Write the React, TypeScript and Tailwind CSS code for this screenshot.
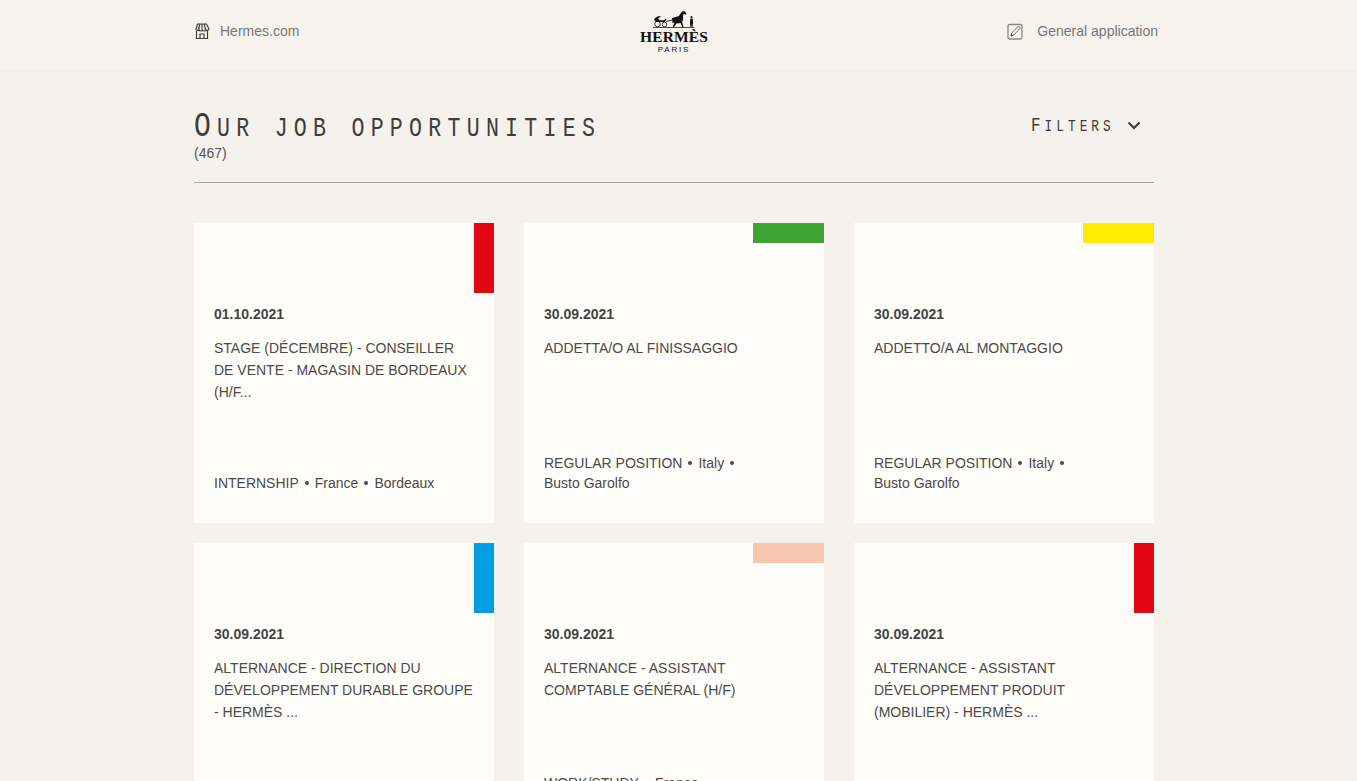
const JOBS = [
  {
    date: "01.10.2021",
    title: ["STAGE (DÉCEMBRE) - CONSEILLER", "DE VENTE - MAGASIN DE BORDEAUX", "(H/F..."],
    meta: [["INTERNSHIP", "France", "Bordeaux"]],
    tag: "tall",
    color: "bg-[#e30613]",
  },
  {
    date: "30.09.2021",
    title: ["ADDETTA/O AL FINISSAGGIO"],
    meta: [["REGULAR POSITION", "Italy", ""], ["Busto Garolfo"]],
    tag: "wide",
    color: "bg-[#3ea535]",
  },
  {
    date: "30.09.2021",
    title: ["ADDETTO/A AL MONTAGGIO"],
    meta: [["REGULAR POSITION", "Italy", ""], ["Busto Garolfo"]],
    tag: "wide",
    color: "bg-[#ffec00]",
  },
  {
    date: "30.09.2021",
    title: ["ALTERNANCE - DIRECTION DU", "DÉVELOPPEMENT DURABLE GROUPE", "- HERMÈS ..."],
    meta: [["WORK/STUDY", "France", "Pantin"]],
    tag: "tall",
    color: "bg-[#009fe3]",
  },
  {
    date: "30.09.2021",
    title: ["ALTERNANCE - ASSISTANT", "COMPTABLE GÉNÉRAL (H/F)"],
    meta: [["WORK/STUDY", "France", ""], ["Pantin"]],
    tag: "wide",
    color: "bg-[#f6c6ae]",
  },
  {
    date: "30.09.2021",
    title: ["ALTERNANCE - ASSISTANT", "DÉVELOPPEMENT PRODUIT", "(MOBILIER) - HERMÈS ..."],
    meta: [["WORK/STUDY", "France", "Pantin"]],
    tag: "tall",
    color: "bg-[#e30613]",
  },
];

function ShopIcon() {
  return (
    <svg width="16" height="16" viewBox="0 0 16 16" fill="none" stroke="#3f3c3a" strokeWidth="1.200">
      <path d="M3.500 1h9l2.500 5a1.600 1.600 0 0 1-3 .6 1.800 1.800 0 0 1-3.500 0 1.800 1.800 0 0 1-3.500 0 1.600 1.600 0 0 1-3-.6z" />
      <path d="M5.800 1 4.500 6.500M8 1v5.500M10.200 1l1.300 5.500" />
      <path d="M2.500 8v7.500h11V8M6 15.500V11h4v4.500" />
    </svg>
  );
}

function EditIcon() {
  return (
    <svg width="16" height="17" viewBox="0 0 16 17" fill="none" stroke="#8a8783" strokeWidth="1.300">
      <rect x="1" y="1.500" width="14" height="14.500" rx="1.500" />
      <path d="M4 13l.8-3L11.500 3l2 2-6.700 7z" fill="#f5f1ec" stroke="#6f6c69" strokeWidth="1" />
      <path d="M4 13l.6-1.500.9.900z" fill="#333" stroke="#333" strokeWidth="0.600" />
    </svg>
  );
}

function Chevron() {
  return (
    <svg width="14" height="9" viewBox="0 0 14 9" fill="none" stroke="#3c3a38" strokeWidth="2">
      <path d="M1.500 1.500 7 7l5.500-5.500" />
    </svg>
  );
}

function Carriage() {
  return (
    <svg width="42" height="17" viewBox="0 0 42 17" fill="#111">
      {/* caleche */}
      <path d="M1 8.500c2-3 4-3.500 6-3.500l.8 1-1.800.6c-.8 1-.8 2 .6 2.600h4.400l2-1.600.6 1-2 2.400H3z" />
      <circle cx="4.500" cy="13" r="2.800" fill="none" stroke="#111" strokeWidth="0.800" />
      <circle cx="11.500" cy="13.500" r="2.300" fill="none" stroke="#111" strokeWidth="0.800" />
      <path d="M13 10l7-1.500.3.800-7 1.500z" />
      {/* horse */}
      <path d="M19 7c3-1 5-1 7-2 1-2 2-4 4-5l2 .5 1.500 2.500-1 .8-1.800-1L30 5c0 2 .5 4-1 6l1.500 5h-1.200L27.500 12l-4 .5-2.500 3.500h-1.300l1.800-4.500-2 .5z" />
      {/* groom */}
      <circle cx="38.500" cy="6" r="1.100" />
      <path d="M37.300 7.500h2.400l.4 4.500-.6 4h-.8l-.2-3-.2 3h-.8l-.5-4z" />
      <path d="M0 16h41.500v.7H0z" />
    </svg>
  );
}

function Logo() {
  return (
    <div className="flex flex-col items-center pt-[11px]">
      <Carriage />
      <p className="mt-[1px] text-[15.500px] leading-[15px] font-bold tracking-[0.100px] text-[#111] font-['Liberation_Serif',serif]">
        HERMÈS
      </p>
      <p className="mt-[1px] text-[8px] leading-[9px] tracking-[1.800px] text-[#111] font-['Liberation_Sans',sans-serif]">PARIS</p>
    </div>
  );
}

function JobCard({ job }: { job: (typeof JOBS)[number] }) {
  return (
    <article className="relative flex h-[300px] flex-col bg-[#fffdf9] px-5 pt-[81px] pb-[30px] text-[14px] text-[#4a4a4a]">
      <div className={`absolute top-0 right-0 ${job.tag === "tall" ? "h-[70px] w-5" : "h-5 w-[71px]"} ${job.color}`} />
      <p className="text-[14px] leading-5 font-bold text-[#444]">{job.date}</p>
      <div className="mt-[13px] leading-[22px]">
        {job.title.map((line) => (
          <p key={line}>{line}</p>
        ))}
      </div>
      <div className="mt-auto leading-5">
        {job.meta.map((row, i) => (
          <p key={i} className="flex items-center">
            {row.map((part, j) => (
              <span key={j} className="flex items-center">
                {j > 0 && <span className="mx-[6px] h-[4px] w-[4px] rounded-full bg-[#4a4a4a]" />}
                {part}
              </span>
            ))}
          </p>
        ))}
      </div>
    </article>
  );
}

export default function App() {
  return (
    <div className="h-screen overflow-hidden bg-[#f5f1ec] pr-[9px] font-['Liberation_Sans',sans-serif]">
      <header className="-mr-[9px] h-[70px] bg-[#f6f2ec] pr-[9px]">
        <div className="mx-auto flex w-[960px] justify-between">
          <a className="mt-[23px] flex h-4 w-[300px] items-center gap-[10px] text-[14px] text-[#777]">
            <ShopIcon />
            Hermes.com
          </a>
          <Logo />
          <a className="mt-[23px] -mr-1 flex h-[17px] w-[304px] items-center justify-end gap-[14px] text-[14px] text-[#777]">
            <EditIcon />
            General application
          </a>
        </div>
      </header>
      <div className="-mr-[9px] h-[15px] bg-gradient-to-b from-[#f3efe8] to-[#f5f1ec]" />

      <main className="mx-auto w-[960px]">
        <div className="flex justify-between border-b border-[#aaa6a0] pt-5 pb-[21px]">
          <div>
            <h1 className="h-10 origin-left scale-x-[0.8] text-[27px] leading-[44px] tracking-[7.800px] whitespace-nowrap text-[#3f3c39] font-['Liberation_Mono',monospace]">
              <span className="text-[35px]">O</span>UR JOB OPPORTUNITIES
            </h1>
            <p className="text-[14px] leading-[16px] text-[#555]">(467)</p>
          </div>
          <button className="mr-[13px] flex h-[40px] items-center gap-[14px]">
            <span className="mt-[2px] w-[82px] origin-left scale-x-[0.8] text-left text-[16px] tracking-[5px] whitespace-nowrap text-[#3f3c39] font-['Liberation_Mono',monospace]">
              <span className="text-[20px]">F</span>ILTERS
            </span>
            <Chevron />
          </button>
        </div>

        <div className="mt-10 grid grid-cols-3 gap-x-[30px] gap-y-5">
          {JOBS.map((job) => (
            <JobCard key={job.title[0] + job.date} job={job} />
          ))}
        </div>
      </main>
    </div>
  );
}
